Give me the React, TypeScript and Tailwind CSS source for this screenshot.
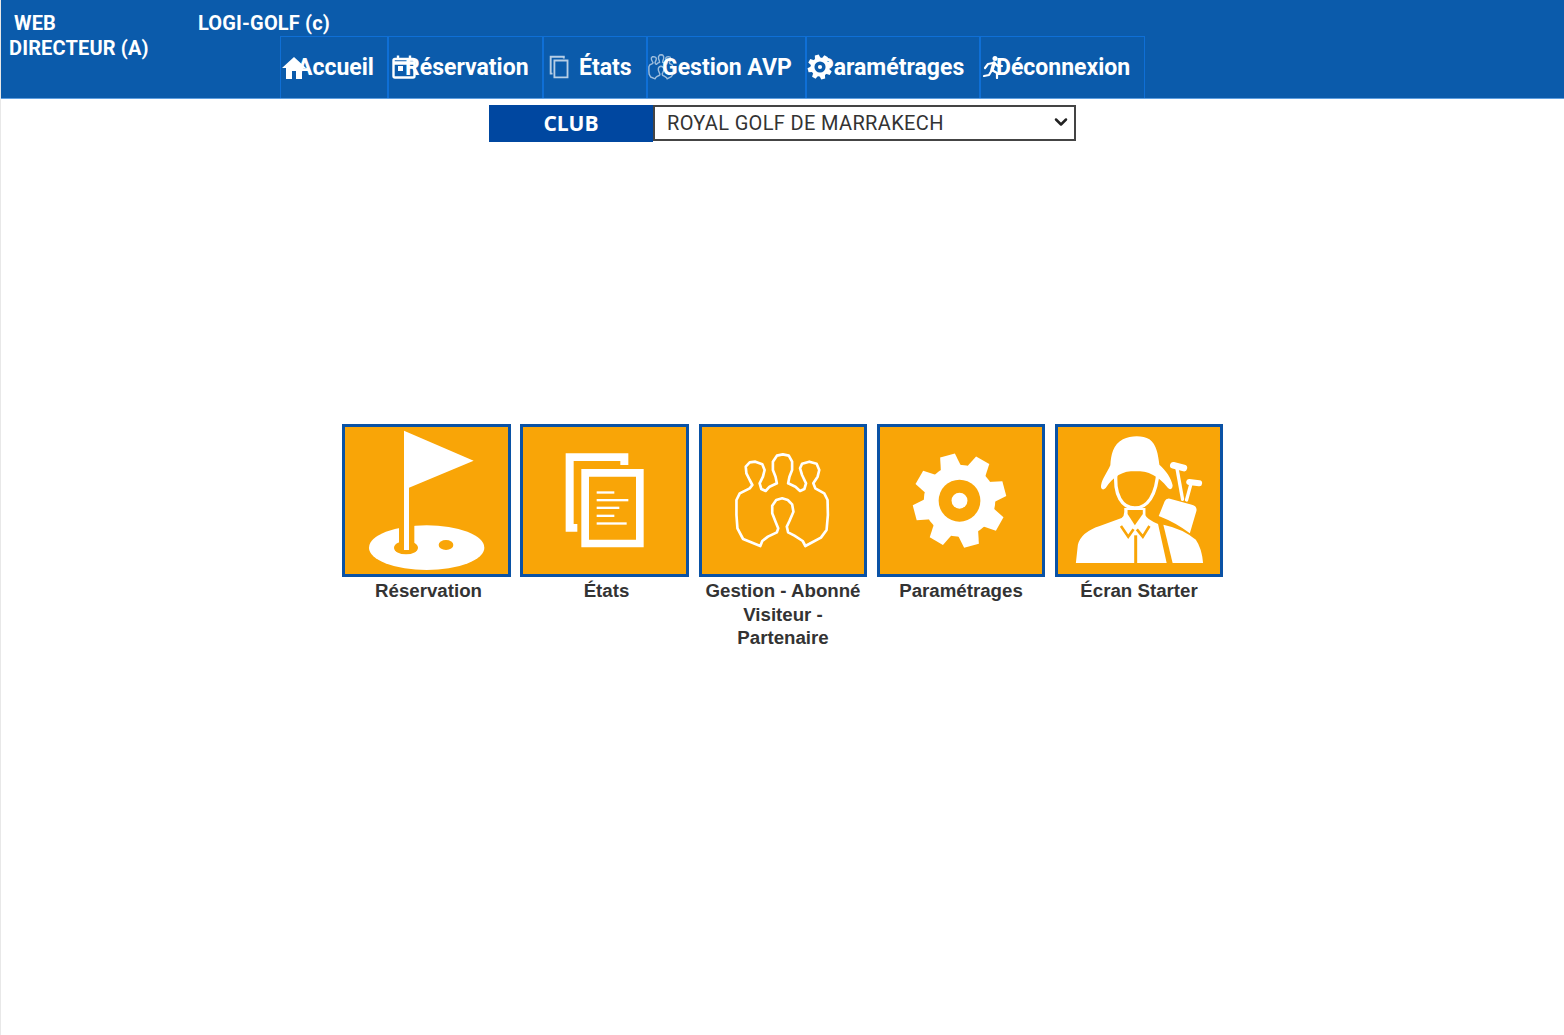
import type { ReactNode } from 'react'
import { ChevronDown } from 'lucide-react'

const roboto = { fontFamily: 'Roboto, sans-serif' }

function GearShape({ hole = '#F9A507' }: { hole?: string }) {
  return (
    <g fill="white">
      {[0, 45, 90, 135, 180, 225, 270, 315].map((a) => (
        <path key={a} transform={`rotate(${a - 15} 270 257)`} d="M238 160 L247 117 L293 117 L302 160Z" />
      ))}
      <circle cx="270" cy="257" r="108" />
      <circle cx="270" cy="257" r="63" fill={hole} />
      <circle cx="270" cy="257" r="24" />
    </g>
  )
}

function DocsShape({ lines = true }: { lines?: boolean }) {
  return (
    <g fill="white">
      <path d="M692 115 H880 V150 H856 V138 H716 V327 H727 V350 H692Z" />
      <path fillRule="evenodd" d="M739 162 H926 V397 H739Z M762 185 V374 H903 V185Z" />
      {lines && (
        <>
          <rect x="785" y="229" width="53" height="7" />
          <rect x="785" y="252" width="95" height="7" />
          <rect x="785" y="275" width="68" height="7" />
          <rect x="785" y="299" width="53" height="7" />
          <rect x="785" y="322" width="90" height="7" />
        </>
      )}
    </g>
  )
}

const peoplePoints =
  '212,393 160,372 143,340 140,300 140,255 150,235 180,220 188,210 180,195 170,175 168,155 180,142 197,140 218,148 225,165 220,185 210,205 215,222 228,228 240,215 262,205 258,185 250,165 250,140 262,122 280,118 298,122 308,140 308,165 300,185 296,205 318,215 332,228 345,222 350,205 338,180 332,160 338,146 360,140 382,146 390,165 385,185 372,205 378,220 405,235 415,255 416,300 412,345 395,368 348,393 340,378 315,362 296,352 292,335 300,318 312,290 308,268 295,255 278,250 260,255 248,272 248,295 258,320 266,340 262,352 235,365 218,378'

function Flag() {
  return (
    <>
      <ellipse cx="275" cy="398" rx="173" ry="67" fill="white" />
      <rect x="192" y="320" width="46" height="80" fill="#F9A507" />
      <ellipse cx="213" cy="398" rx="36" ry="20" fill="#F9A507" />
      <ellipse cx="333" cy="390" rx="22" ry="15" fill="#F9A507" />
      <path d="M207 47 L416 137 L222 218 V405 H207Z" fill="white" />
    </>
  )
}

function Golfer() {
  return (
    <>
      {/* clubs */}
      <g fill="none" stroke="white" strokeLinecap="round">
        <path d="M342 112 L374 120" strokeWidth="20" />
        <path d="M352 115 L370 214" strokeWidth="10" />
        <path d="M390 162 L420 166" strokeWidth="18" />
        <path d="M396 165 L382 216" strokeWidth="10" />
      </g>
      {/* bag */}
      <path d="M298 264 L316 220 Q320 210 332 212 L398 230 Q414 234 412 248 L392 316 Q350 284 298 264Z" fill="white" />
      {/* body */}
      <path d="M48 405 L54 350 Q64 312 120 294 L186 270 Q194 264 194 252 L194 240 L258 240 L258 262 Q262 274 296 288 L322 405Z" fill="white" />
      <path d="M312 290 Q370 302 410 335 Q428 360 432 405 L340 405Z" fill="white" />
      <path d="M204 246 H250 V258 L226 292 L204 258Z" fill="#F9A507" />
      <path d="M184 294 L206 326 L222 304" fill="none" stroke="#F9A507" strokeWidth="8" />
      <path d="M270 294 L250 326 L232 304" fill="none" stroke="#F9A507" strokeWidth="8" />
      <rect x="224" y="322" width="9" height="84" fill="#F9A507" />
      {/* face */}
      <path d="M170 125 C160 205 190 240 226 240 C262 240 292 205 296 125Z" fill="#F9A507" stroke="white" strokeWidth="10" />
      {/* hat */}
      <path d="M124 172 C128 150 142 135 152 112 C154 80 160 50 190 34 C215 22 250 22 270 34 C292 50 296 80 300 110 C320 128 336 150 340 172 C340 186 330 186 324 178 C300 145 265 128 228 128 C190 128 160 145 138 180 C130 188 122 184 124 172Z" fill="white" />
    </>
  )
}

function Home() {
  return (
    <svg viewBox="0 0 24 24" className="h-6 w-6 shrink-0" fill="white">
      <path d="M12 2 L24 13 H20 V24 H14 V16 H10 V24 H4 V13 H0Z" />
    </svg>
  )
}

function Calendar() {
  return (
    <svg viewBox="0 0 24 24" className="h-6 w-6 shrink-0" fill="none" stroke="white" strokeWidth="2.4">
      <rect x="1.5" y="4" width="21" height="18.5" rx="1.5" />
      <path d="M1.5 8 H22.5" strokeWidth="3.5" />
      <path d="M6 0.5 V5 M18 0.5 V5" />
      <rect x="6" y="11" width="5" height="5" fill="white" stroke="none" />
    </svg>
  )
}

function Runner() {
  return (
    <svg viewBox="0 0 24 24" className="h-6 w-6 shrink-0" fill="none" stroke="white" strokeWidth="2.2" strokeLinecap="round" strokeLinejoin="round">
      <circle cx="13" cy="3.5" r="2.5" fill="white" stroke="none" />
      <path d="M12 8 L10 15" strokeWidth="3.5" />
      <path d="M11 8 L6 9 L3 13" />
      <path d="M12 8 L16 11 L20 11" />
      <path d="M10 15 L15 18 L15 23" />
      <path d="M10 15 L7 20 L2 21" />
    </svg>
  )
}

const navItems: { label: string; icon: ReactNode; cls: string; iconCls: string }[] = [
  { label: 'Accueil', icon: <Home />, cls: 'w-[108px]', iconCls: 'ml-[1px] -mr-[9px]' },
  { label: 'Réservation', icon: <Calendar />, cls: 'w-[155px]', iconCls: 'ml-[3px] -mr-[11px]' },
  {
    label: 'États',
    icon: (
      <svg viewBox="680 105 256 300" className="h-6 w-6 shrink-0 opacity-70">
        <DocsShape lines={false} />
      </svg>
    ),
    cls: 'w-[104px]',
    iconCls: 'ml-[3px] mr-[8px]',
  },
  {
    label: 'Gestion AVP',
    icon: (
      <svg viewBox="130 110 296 296" className="h-[26px] w-[26px] shrink-0 opacity-60">
        <polygon points={peoplePoints} fill="none" stroke="white" strokeWidth="16" strokeLinejoin="round" />
      </svg>
    ),
    cls: 'w-[159px]',
    iconCls: 'ml-0 -mr-[12px]',
  },
  {
    label: 'Paramétrages',
    icon: (
      <svg viewBox="125 110 290 294" className="h-[26px] w-[26px] shrink-0">
        <GearShape hole="#0B5BAB" />
      </svg>
    ),
    cls: 'w-[174px]',
    iconCls: 'ml-0 -mr-[14px]',
  },
  { label: 'Déconnexion', icon: <Runner />, cls: 'w-[165px]', iconCls: 'ml-[1px] -mr-[10px]' },
]

const tiles: { id: string; label: ReactNode; viewBox: string; art: ReactNode; cls: string; labelCls: string }[] = [
  { id: 'resa', label: 'Réservation', viewBox: '30 36 489 441', art: <Flag />, cls: 'w-[169px]', labelCls: 'pl-1' },
  { id: 'etats', label: 'États', viewBox: '564 36 489 441', art: <DocsShape />, cls: 'w-[169px]', labelCls: 'pl-1' },
  {
    id: 'gestion',
    label: (
      <>
        Gestion - Abonné
        <br />
        Visiteur -
        <br />
        Partenaire
      </>
    ),
    viewBox: '36 36 489 441',
    art: <polygon points={peoplePoints} fill="none" stroke="white" strokeWidth="8" strokeLinejoin="round" />,
    cls: 'ml-px w-[168px]',
    labelCls: '',
  },
  { id: 'params', label: 'Paramétrages', viewBox: '30 36 489 441', art: <GearShape />, cls: 'ml-px w-[168px]', labelCls: '' },
  { id: 'starter', label: 'Écran Starter', viewBox: '-6 -3 489 441', art: <Golfer />, cls: 'ml-px w-[168px]', labelCls: '' },
]

export default function App() {
  return (
    <div className="min-h-screen border-l border-[#e8e8e8] bg-white">
      {/* Header */}
      <header className="flex h-[99px] border-b border-[#5f9fe0] bg-[#0B5BAB] font-bold text-white" style={roboto}>
        <div className="w-[197px] shrink-0 pt-[11px] text-[20px] leading-[25px] tracking-[0.15px]">
          <div className="pl-[13px]">WEB</div>
          <div className="pl-[8px]">DIRECTEUR (A)</div>
        </div>
        <div>
          <div className="h-[36px] pt-[11px] text-[20px] leading-[25px] tracking-[0.15px]">LOGI-GOLF (c)</div>
          <nav className="ml-[82px] flex">
            {navItems.map((item) => (
              <a
                key={item.label}
                className={`flex h-[62px] items-center whitespace-nowrap border border-b-0 border-[#0F6FD6] pt-[2px] text-[23px] ${item.cls}`}
              >
                <span className={`relative z-0 -mt-[3px] flex ${item.iconCls}`}>{item.icon}</span>
                <span>{item.label}</span>
              </a>
            ))}
          </nav>
        </div>
      </header>

      {/* Club */}
      <div className="mt-[6px] flex justify-center">
        <div
          className="flex h-[37px] w-[164px] items-center justify-center bg-[#0047A0] text-[21px] font-bold text-white"
          style={{ fontFamily: '"Open Sans", sans-serif' }}
        >
          CLUB
        </div>
        <div className="relative h-[36px] w-[423px]">
          <select
            defaultValue="rgm"
            className="h-full w-full appearance-none border-2 border-[#444] bg-white pl-[12px] text-[20px] tracking-[0.35px] text-[#333]"
            style={roboto}
          >
            <option value="rgm">ROYAL GOLF DE MARRAKECH</option>
          </select>
          <ChevronDown className="pointer-events-none absolute right-[5px] top-[7px] h-5 w-5 text-[#222]" strokeWidth={3} />
        </div>
      </div>

      {/* Tiles */}
      <div className="mt-[282px] flex justify-center gap-[9px]">
        {tiles.map((tile) => (
          <div key={tile.id} className={tile.cls}>
            <div className="h-[153px] border-[3px] border-[#0A52A5] bg-[#F9A507]">
              <svg viewBox={tile.viewBox} className="block h-full w-full" preserveAspectRatio="none">
                {tile.art}
              </svg>
            </div>
            <div
              className={`-mx-1 mt-[2px] text-center text-[18.7px] font-bold leading-[23.5px] text-[#333] ${tile.labelCls}`}
              style={{ fontFamily: '"Liberation Sans", sans-serif' }}
            >
              {tile.label}
            </div>
          </div>
        ))}
      </div>
    </div>
  )
}
